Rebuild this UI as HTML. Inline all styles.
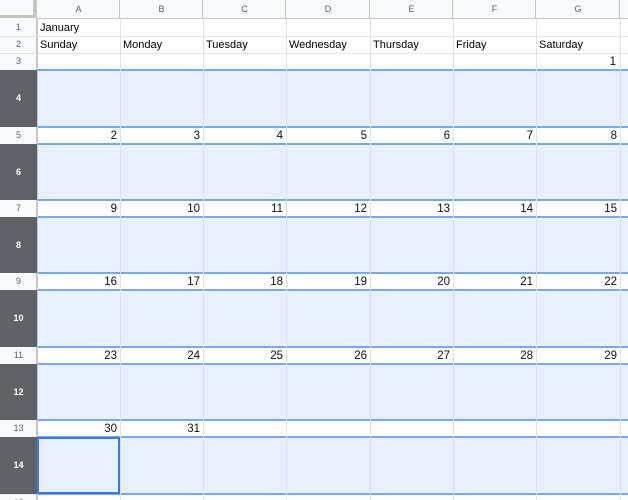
<!DOCTYPE html>
<html><head><meta charset="utf-8"><style>
*{margin:0;padding:0;box-sizing:border-box}
html,body{width:628px;height:500px;overflow:hidden}
body{background:#fff;position:relative;font-family:"Liberation Sans",Arial,sans-serif;font-size:11px;color:#000}
div{position:absolute}
.v{top:19px;width:1px;height:481px;background:#e2e3e3}
.h{left:0;height:1px;width:628px;background:#e2e3e3}
.ch{top:0;height:19px;text-align:center;line-height:19px;font-size:9px;color:#5f6368}
.rh{left:0;width:37px;text-align:center;font-size:9px;color:#5f6368;overflow:hidden}
.band{left:37px;width:591px;background:#e8f0fe;border-top:2px solid #7aa7f0;border-bottom:2px solid #7aa7f0}
.dk{left:0;width:37px;background:#5f6368;color:#fff;font-weight:bold;font-size:9px;text-align:center}
.t{height:17px;line-height:18px}
.n{text-align:right;width:80px;height:17px;line-height:18px;font-size:11.5px;color:#111}
</style></head><body>
<div style="left:0;top:0;width:628px;height:19px;background:#f8f9fa;border-bottom:1px solid #c4c7c5"></div>
<div style="left:0;top:0;width:37px;height:500px;background:#f8f9fa;border-right:1px solid #c4c7c5"></div>
<div style="left:0;top:0;width:36px;height:18px;border-right:3px solid #c4c7c5;border-bottom:3px solid #c4c7c5;background:#f8f9fa"></div>
<div class="ch" style="left:37px;width:83px">A</div>
<div class="ch" style="left:120px;width:83px">B</div>
<div class="ch" style="left:203px;width:83px">C</div>
<div class="ch" style="left:286px;width:84px">D</div>
<div class="ch" style="left:370px;width:83px">E</div>
<div class="ch" style="left:453px;width:83px">F</div>
<div class="ch" style="left:536px;width:84px">G</div>
<div class="h" style="top:36px"></div><div class="h" style="top:53px"></div>
<div class="h" style="top:494px"></div>
<div class="band" style="top:69px;height:59px"></div>
<div class="band" style="top:143px;height:58px"></div>
<div class="band" style="top:216px;height:58px"></div>
<div class="band" style="top:289px;height:59px"></div>
<div class="band" style="top:363px;height:58px"></div>
<div class="band" style="top:436px;height:59px"></div>
<div class="v" style="left:37px;background:#c4c7c5"></div>
<div class="v" style="left:120px"></div><div class="v" style="left:203px"></div><div class="v" style="left:286px"></div><div class="v" style="left:370px"></div><div class="v" style="left:453px"></div><div class="v" style="left:536px"></div><div class="v" style="left:620px"></div>
<div class="v" style="left:119px;top:0;height:19px;background:#c4c7c5"></div><div class="v" style="left:202px;top:0;height:19px;background:#c4c7c5"></div><div class="v" style="left:285px;top:0;height:19px;background:#c4c7c5"></div><div class="v" style="left:369px;top:0;height:19px;background:#c4c7c5"></div><div class="v" style="left:452px;top:0;height:19px;background:#c4c7c5"></div><div class="v" style="left:535px;top:0;height:19px;background:#c4c7c5"></div><div class="v" style="left:619px;top:0;height:19px;background:#c4c7c5"></div>
<div class="rh" style="top:19px;height:17px;line-height:17px">1</div>
<div class="rh" style="top:36px;height:17px;line-height:17px">2</div>
<div class="rh" style="top:53px;height:17px;line-height:17px">3</div>
<div class="rh" style="top:127px;height:17px;line-height:17px">5</div>
<div class="rh" style="top:200px;height:17px;line-height:17px">7</div>
<div class="rh" style="top:273px;height:17px;line-height:17px">9</div>
<div class="rh" style="top:347px;height:17px;line-height:17px">11</div>
<div class="rh" style="top:420px;height:17px;line-height:17px">13</div>
<div class="rh" style="top:495px;height:5px;line-height:17px">15</div>
<div class="dk" style="top:70px;height:57px;line-height:57px">4</div>
<div class="dk" style="top:144px;height:56px;line-height:56px">6</div>
<div class="dk" style="top:217px;height:56px;line-height:56px">8</div>
<div class="dk" style="top:290px;height:57px;line-height:57px">10</div>
<div class="dk" style="top:364px;height:56px;line-height:56px">12</div>
<div class="dk" style="top:437px;height:57px;line-height:57px">14</div>
<div style="left:37px;top:437px;width:83px;height:57px;border:2px solid #3b78e7"></div>
<div class="t" style="left:40px;top:19px">January</div>
<div class="t" style="left:40px;top:36px">Sunday</div>
<div class="t" style="left:123px;top:36px">Monday</div>
<div class="t" style="left:206px;top:36px">Tuesday</div>
<div class="t" style="left:289px;top:36px">Wednesday</div>
<div class="t" style="left:373px;top:36px">Thursday</div>
<div class="t" style="left:456px;top:36px">Friday</div>
<div class="t" style="left:539px;top:36px">Saturday</div>
<div class="n" style="left:536px;top:53px">1</div>
<div class="n" style="left:37px;top:127px">2</div><div class="n" style="left:120px;top:127px">3</div><div class="n" style="left:203px;top:127px">4</div><div class="n" style="left:287px;top:127px">5</div><div class="n" style="left:370px;top:127px">6</div><div class="n" style="left:453px;top:127px">7</div><div class="n" style="left:537px;top:127px">8</div>
<div class="n" style="left:37px;top:200px">9</div><div class="n" style="left:120px;top:200px">10</div><div class="n" style="left:203px;top:200px">11</div><div class="n" style="left:287px;top:200px">12</div><div class="n" style="left:370px;top:200px">13</div><div class="n" style="left:453px;top:200px">14</div><div class="n" style="left:537px;top:200px">15</div>
<div class="n" style="left:37px;top:273px">16</div><div class="n" style="left:120px;top:273px">17</div><div class="n" style="left:203px;top:273px">18</div><div class="n" style="left:287px;top:273px">19</div><div class="n" style="left:370px;top:273px">20</div><div class="n" style="left:453px;top:273px">21</div><div class="n" style="left:537px;top:273px">22</div>
<div class="n" style="left:37px;top:347px">23</div><div class="n" style="left:120px;top:347px">24</div><div class="n" style="left:203px;top:347px">25</div><div class="n" style="left:287px;top:347px">26</div><div class="n" style="left:370px;top:347px">27</div><div class="n" style="left:453px;top:347px">28</div><div class="n" style="left:537px;top:347px">29</div>
<div class="n" style="left:37px;top:420px">30</div><div class="n" style="left:120px;top:420px">31</div>
</body></html>
